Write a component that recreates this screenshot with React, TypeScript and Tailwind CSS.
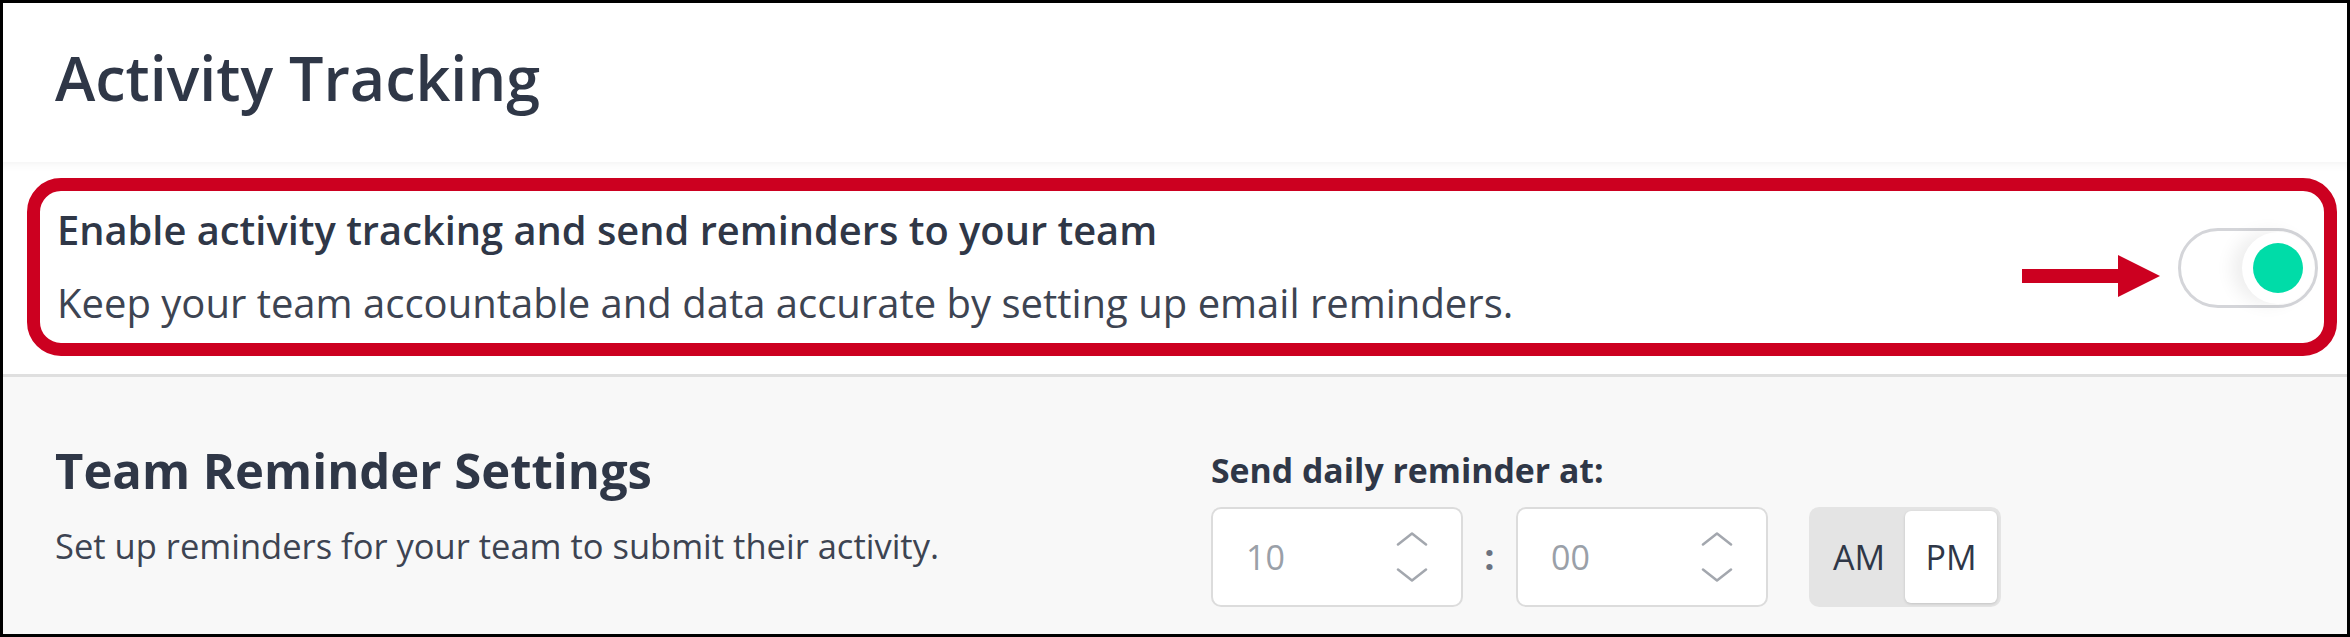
import React, { useState } from "react";

const font = { fontFamily: "'Open Sans', 'Noto Sans', sans-serif" };

const Chevrons = () => (
  <div className="flex flex-col gap-[22px]">
    <svg width="32" height="14" viewBox="0 0 32 14" fill="none">
      <polyline points="2,12.5 16,1.5 30,12.5" stroke="#a3a7ae" strokeWidth="2.5" strokeLinecap="round" strokeLinejoin="round" />
    </svg>
    <svg width="32" height="14" viewBox="0 0 32 14" fill="none">
      <polyline points="2,1.5 16,12.5 30,1.5" stroke="#a3a7ae" strokeWidth="2.5" strokeLinecap="round" strokeLinejoin="round" />
    </svg>
  </div>
);

const TimeInput = ({ value }: { value: string }) => (
  <div className="w-[252px] h-[100px] bg-white border-2 border-[#dcdcdc] rounded-[10px] flex items-center justify-between pl-[33px] pr-[33px]">
    <span className="text-[34px] text-[#9aa0a8]">{value}</span>
    <Chevrons />
  </div>
);

export default function App() {
  const [enabled, setEnabled] = useState(true);
  const [period, setPeriod] = useState<"AM" | "PM">("PM");

  return (
    <div className="w-[2350px] h-[637px] border-[3px] border-black bg-[#f8f8f8] flex flex-col overflow-hidden" style={font}>
      {/* header */}
      <div className="h-[159px] bg-white pl-[52px] pt-[37px] shrink-0">
        <h1 className="text-[61px] leading-[76px] font-semibold text-[#2f3747]">Activity Tracking</h1>
      </div>

      {/* enable row */}
      <div className="relative h-[215px] shrink-0 bg-white border-b-[3px] border-[#dfdfdf] shadow-[inset_0_10px_10px_-8px_rgba(0,0,0,0.05)] flex justify-between pl-[54px] pr-[29px]">
        <div className="flex flex-col gap-[29px] pt-[46px]">
          <div className="text-[39.8px] leading-[44px] font-semibold text-[#2f3747]">
            Enable activity tracking and send reminders to your team
          </div>
          <div className="text-[40px] leading-[44px] text-[#3d4452]">
            Keep your team accountable and data accurate by setting up email reminders.
          </div>
        </div>

        <button
          onClick={() => setEnabled((v) => !v)}
          className={`self-center w-[140px] h-[80px] rounded-full border-[3px] border-[#d4d5d9] bg-white flex items-center px-[1px] ${enabled ? "justify-end" : "justify-start"}`}
        >
          <span className="w-[72px] h-[72px] rounded-full bg-white shadow-[-10px_0_18px_rgba(0,0,0,0.07)] flex items-center justify-center">
            <span className={`w-[50px] h-[50px] rounded-full ${enabled ? "bg-[#00dca8]" : "bg-[#d4d5d9]"}`} />
          </span>
        </button>

        {/* annotation */}
        <div className="absolute left-[24px] right-[10px] top-[16px] bottom-[18px] border-[13px] border-[#cc0020] rounded-[34px] pointer-events-none" />
        <svg className="absolute left-[2019px] top-[93px]" width="140" height="44" viewBox="0 0 140 44">
          <rect x="0" y="14" width="98" height="14" fill="#cc0020" />
          <polygon points="96,0 138,21 96,42" fill="#cc0020" />
        </svg>
      </div>

      {/* reminder settings */}
      <div className="flex pl-[52px] flex-1">
        <div className="w-[1156px] pt-[65px]">
          <h2 className="text-[49px] leading-[56px] font-bold text-[#2f3747]">Team Reminder Settings</h2>
          <p className="mt-[28px] text-[34.5px] leading-[40px] text-[#3d4452]">
            Set up reminders for your team to submit their activity.
          </p>
        </div>
        <div className="pt-[73px]">
          <div className="text-[33.8px] leading-[40px] font-bold text-[#2f3747]">Send daily reminder at:</div>
          <div className="mt-[17px] flex items-center">
            <TimeInput value="10" />
            <span className="w-[53px] text-center text-[36px] text-[#6b7280] font-bold">:</span>
            <TimeInput value="00" />
            <div className="ml-[41px] w-[192px] h-[100px] rounded-[10px] bg-[#e4e4e4] flex p-[4px]">
              {(["AM", "PM"] as const).map((p) => (
                <button
                  key={p}
                  onClick={() => setPeriod(p)}
                  className={`flex-1 rounded-[6px] text-[34px] text-[#2f3747] ${period === p ? "bg-white shadow-[0_1px_3px_rgba(0,0,0,0.15)]" : ""}`}
                >
                  {p}
                </button>
              ))}
            </div>
          </div>
        </div>
      </div>
    </div>
  );
}
